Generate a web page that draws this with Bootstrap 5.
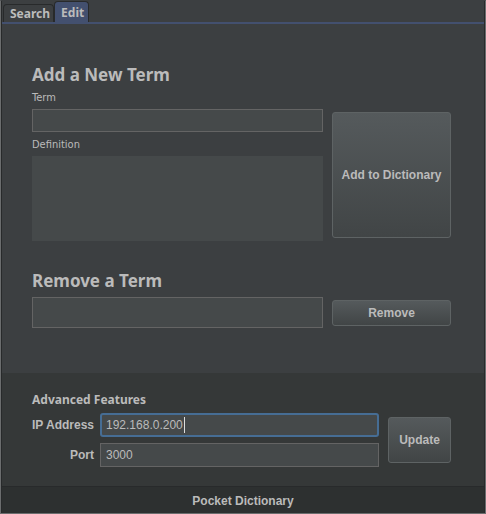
<!DOCTYPE html>
<html lang="en">
<head>
<meta charset="utf-8">
<meta name="viewport" content="width=device-width, initial-scale=1">
<title>Pocket Dictionary</title>
<link href="https://cdn.jsdelivr.net/npm/bootstrap@5.3.0/dist/css/bootstrap.min.css" rel="stylesheet">
<style>
  body { background: #3c3f41; color: #bbb; font: 12px/16px "Liberation Sans", Arial, sans-serif; }
  .app-window { border: 1px solid #6b6d6e; border-top-color: #3c3f41; box-shadow: inset 1px 0 #282a2b, inset -1px 0 #282a2b; padding: 0 1px; }
  .app-tabs { height: 23px; padding: 0 0 0 1px; border-bottom: 2px solid #43506f; }
  .app-tabs .nav-link { color: #bbb; font: bold 12px/16px "Noto Sans", sans-serif; border: 1px solid #282a2b; border-bottom: 0; border-radius: 4px 4px 0 0; margin: 0; padding: 1px 3px 0 6px; height: 18px; }
  .app-tabs .nav-link.active { background: #43506f; color: #bbb; border-color: #282a2b; height: 21px; padding: 1px 4px 0 6px; }
  .main-pane { padding: 41px 33px 42px 30px; }
  .pane-title { font: bold 17px/20px "Noto Sans", sans-serif; margin: 0; }
  .field-label { font: 11px/16px "DejaVu Sans Condensed", "Noto Sans", sans-serif; padding: 5px 0 3px; }
  .form-control, .form-control:focus { background: #45494a; color: #bbb; border: 1px solid #646464; border-radius: 0; font: 12px/16px "Liberation Sans", Arial, sans-serif; padding: 3px 6px; min-height: 0; box-shadow: none; }
  .term-box { height: 23px; }
  textarea.form-control { height: 85px; border-color: #45494a; resize: none; }
  .removal-box { height: 31px; }
  .split { gap: 9px; }
  .action-col { width: 119px; }
  .btn-dark-face { --bs-btn-color: #bbb; --bs-btn-hover-color: #ddd; --bs-btn-active-color: #ddd; background: linear-gradient(#555a5c, #414546); border: 1px solid #5e6364; border-radius: 3px; font: bold 12px/16px "Liberation Sans", Arial, sans-serif; padding: 0; }
  .btn-add { height: 126px; margin-top: 23px; }
  .btn-remove { height: 26px; }
  .removal-form { margin-top: 30px; }
  .removal-form .pane-title { padding-bottom: 6px; }
  .advanced-pane { background: #353838; padding: 19px 33px 19px 30px; }
  .advanced-title { font: bold 12px/16px "Noto Sans", sans-serif; margin: 0 0 5px; }
  .ip-row { margin-bottom: 6px; }
  .row-label { width: 62px; margin-right: 6px; font-weight: bold; text-align: right; white-space: nowrap; }
  .form-control.ip-box, .form-control.ip-box:focus { height: 24px; border: 2px solid #466d94; border-radius: 3px; padding: 2px 4px; }
  .port-box { height: 24px; padding: 3px 5px; }
  .text-caret { position: absolute; left: 84px; top: 4px; width: 1px; height: 16px; background: #ddd; }
  .btn-update { width: 63px; height: 46px; }
  .app-footer { background: #2d3030; border-top: 1px solid #282a2b; padding: 6px 0 4px; font-weight: bold; }
</style>
<script src="https://cdn.jsdelivr.net/npm/bootstrap@5.3.0/dist/js/bootstrap.bundle.min.js"></script>
</head>
<body>
<div class="app-window d-flex flex-column min-vh-100">
  <ul class="nav nav-tabs app-tabs align-items-end flex-nowrap" role="tablist">
    <li class="nav-item" role="presentation"><button class="nav-link" type="button" role="tab" aria-selected="false">Search</button></li>
    <li class="nav-item" role="presentation"><button class="nav-link active" type="button" role="tab" aria-selected="true">Edit</button></li>
  </ul>
  <main class="flex-grow-1 d-flex flex-column">
    <div class="main-pane flex-grow-1">
      <form>
        <h1 class="pane-title">Add a New Term</h1>
        <div class="d-flex split">
          <div class="flex-grow-1">
            <label class="field-label d-block" for="term">Term</label>
            <input class="form-control term-box" id="term" type="text">
            <label class="field-label d-block" for="definition">Definition</label>
            <textarea class="form-control" id="definition"></textarea>
          </div>
          <div class="action-col flex-shrink-0 d-grid align-content-start pt-1"><button class="btn btn-dark-face btn-add" type="button">Add to Dictionary</button></div>
        </div>
      </form>
      <form class="removal-form">
        <label class="pane-title d-block" for="removal">Remove a Term</label>
        <div class="d-flex align-items-center split">
          <input class="form-control removal-box" id="removal" type="text">
          <div class="action-col flex-shrink-0 d-grid"><button class="btn btn-dark-face btn-remove" type="button">Remove</button></div>
        </div>
      </form>
    </div>
    <form class="advanced-pane">
      <h2 class="advanced-title">Advanced Features</h2>
      <div class="d-flex align-items-center split">
        <div class="flex-grow-1">
          <div class="ip-row d-flex align-items-center">
            <label class="row-label flex-shrink-0" for="ip">IP Address</label>
            <div class="position-relative flex-grow-1">
              <input class="form-control ip-box" id="ip" type="text" value="192.168.0.200">
              <span class="text-caret"></span>
            </div>
          </div>
          <div class="d-flex align-items-center">
            <label class="row-label flex-shrink-0" for="port">Port</label>
            <input class="form-control port-box" id="port" type="text" value="3000">
          </div>
        </div>
        <button class="btn btn-dark-face btn-update flex-shrink-0" type="button">Update</button>
      </div>
    </form>
  </main>
  <footer class="app-footer text-center">Pocket Dictionary</footer>
</div>
</body>
</html>
